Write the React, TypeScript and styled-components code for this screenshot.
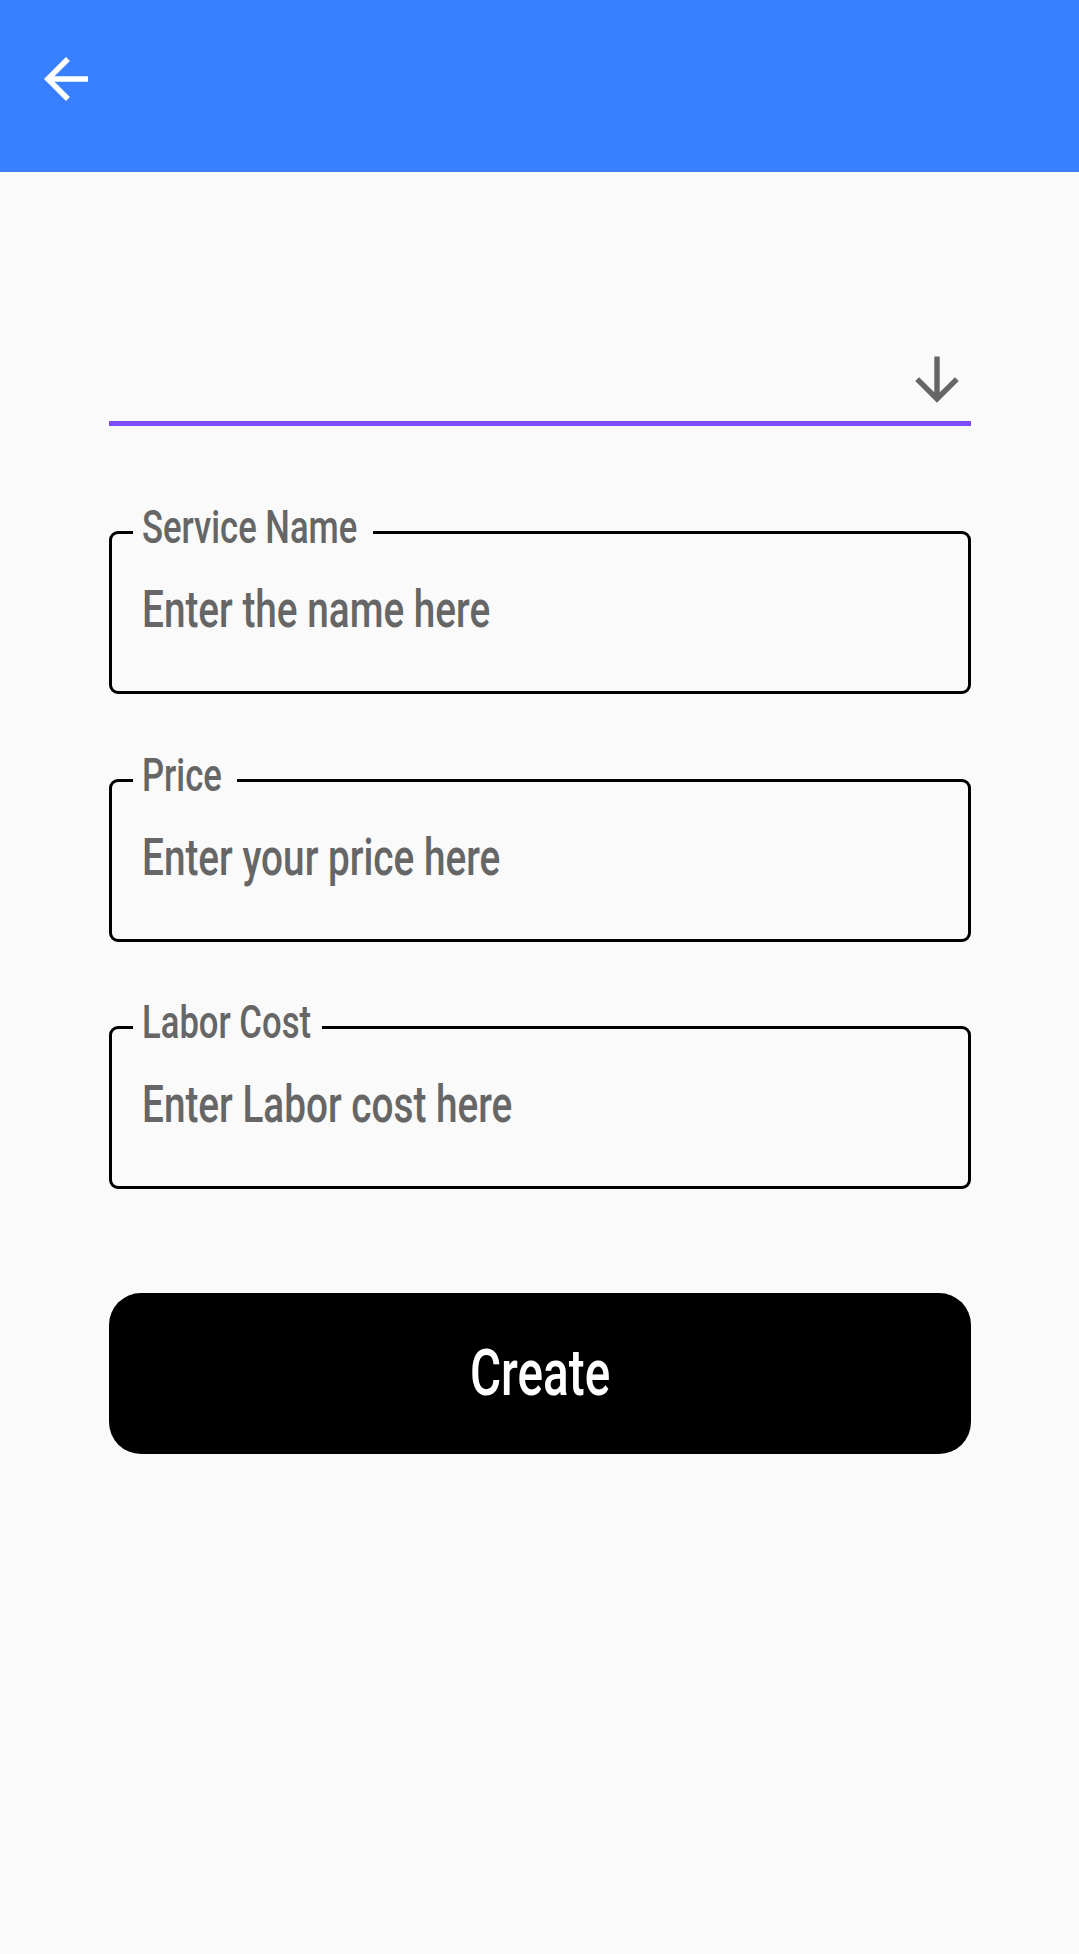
import React from "react";
import styled, { createGlobalStyle } from "styled-components";

const FONT = `Roboto, "Liberation Sans", sans-serif`;
const SQUEEZE = 0.745;

const GlobalStyle = createGlobalStyle`
  html, body {
    margin: 0;
    padding: 0;
    background: #fafafa;
    font-family: ${FONT};
  }
  * { box-sizing: border-box; }
`;

const Page = styled.div`
  min-height: 1954px;
  background: #fafafa;
`;

const Toolbar = styled.header`
  height: 172px;
  background: #3880ff;
  display: flex;
  align-items: flex-start;
  padding: 46px 0 0 33px;
`;

const IconButton = styled.button`
  width: 66px;
  height: 66px;
  padding: 0;
  border: none;
  background: transparent;
  display: flex;
  align-items: center;
  justify-content: center;
  cursor: pointer;
`;

const Form = styled.main`
  display: flex;
  flex-direction: column;
  padding: 0 108px 0 109px;
`;

const Select = styled.div`
  margin-top: 169px;
  height: 85px;
  border-bottom: 5px solid #7c4dff;
  display: flex;
  justify-content: flex-end;
  align-items: flex-start;
  padding: 6px 1px 0 0;
`;

const Field = styled.label<{ $gap: number }>`
  position: relative;
  display: block;
  margin-top: ${(p) => p.$gap}px;
  height: 163px;
  border: 3px solid #000;
  border-radius: 9px;
  padding: 45px 30px 0;
`;

const FieldLabel = styled.span<{ $width: number }>`
  position: absolute;
  top: -30px;
  left: 21px;
  width: ${(p) => p.$width}px;
  height: 47px;
  padding-left: 9px;
  background: #fafafa;
  white-space: nowrap;
`;

const LabelText = styled.span`
  display: inline-block;
  transform: scaleX(${SQUEEZE});
  transform-origin: left center;
  color: #666;
  font-family: ${FONT};
  font-weight: 500;
  font-size: 46.5px;
  line-height: 1;
`;

const Input = styled.input`
  display: block;
  width: calc(100% / ${SQUEEZE});
  height: 60px;
  padding: 0;
  border: none;
  outline: none;
  background: transparent;
  transform: scaleX(${SQUEEZE});
  transform-origin: left center;
  font-family: ${FONT};
  font-weight: 500;
  font-size: 52px;
  color: #222;
  &::placeholder {
    color: #666;
    opacity: 1;
  }
`;

const SubmitButton = styled.button`
  margin-top: 104px;
  height: 161px;
  border: none;
  border-radius: 32px;
  background: #000;
  color: #fff;
  display: flex;
  align-items: center;
  justify-content: center;
  cursor: pointer;
`;

const ButtonText = styled.span`
  display: inline-block;
  transform: scaleX(${SQUEEZE});
  font-family: ${FONT};
  font-weight: 500;
  font-size: 64px;
`;

const ArrowBack = () => (
  <svg width="66" height="66" viewBox="0 0 24 24" fill="#fff">
    <path d="M20 11H7.83l5.59-5.59L12 4l-8 8 8 8 1.41-1.41L7.83 13H20v-2z" />
  </svg>
);

const ArrowDown = () => (
  <svg width="66" height="68" viewBox="0 -0.5 24 25" fill="#666">
    <path d="M20 12l-1.41-1.41L13 16.17V3h-2v13.17l-5.58-5.59L4 12l8 8 8-8z" />
  </svg>
);

const fields = [
  { label: "Service Name", placeholder: "Enter the name here", gap: 105, width: 240 },
  { label: "Price", placeholder: "Enter your price here", gap: 85, width: 104 },
  { label: "Labor Cost", placeholder: "Enter Labor cost here", gap: 84, width: 189 },
];

export default function App() {
  return (
    <Page>
      <GlobalStyle />
      <Toolbar>
        <IconButton aria-label="Back">
          <ArrowBack />
        </IconButton>
      </Toolbar>
      <Form>
        <Select>
          <ArrowDown />
        </Select>
        {fields.map((f) => (
          <Field key={f.label} $gap={f.gap}>
            <FieldLabel $width={f.width}>
              <LabelText>{f.label}</LabelText>
            </FieldLabel>
            <Input placeholder={f.placeholder} />
          </Field>
        ))}
        <SubmitButton>
          <ButtonText>Create</ButtonText>
        </SubmitButton>
      </Form>
    </Page>
  );
}
